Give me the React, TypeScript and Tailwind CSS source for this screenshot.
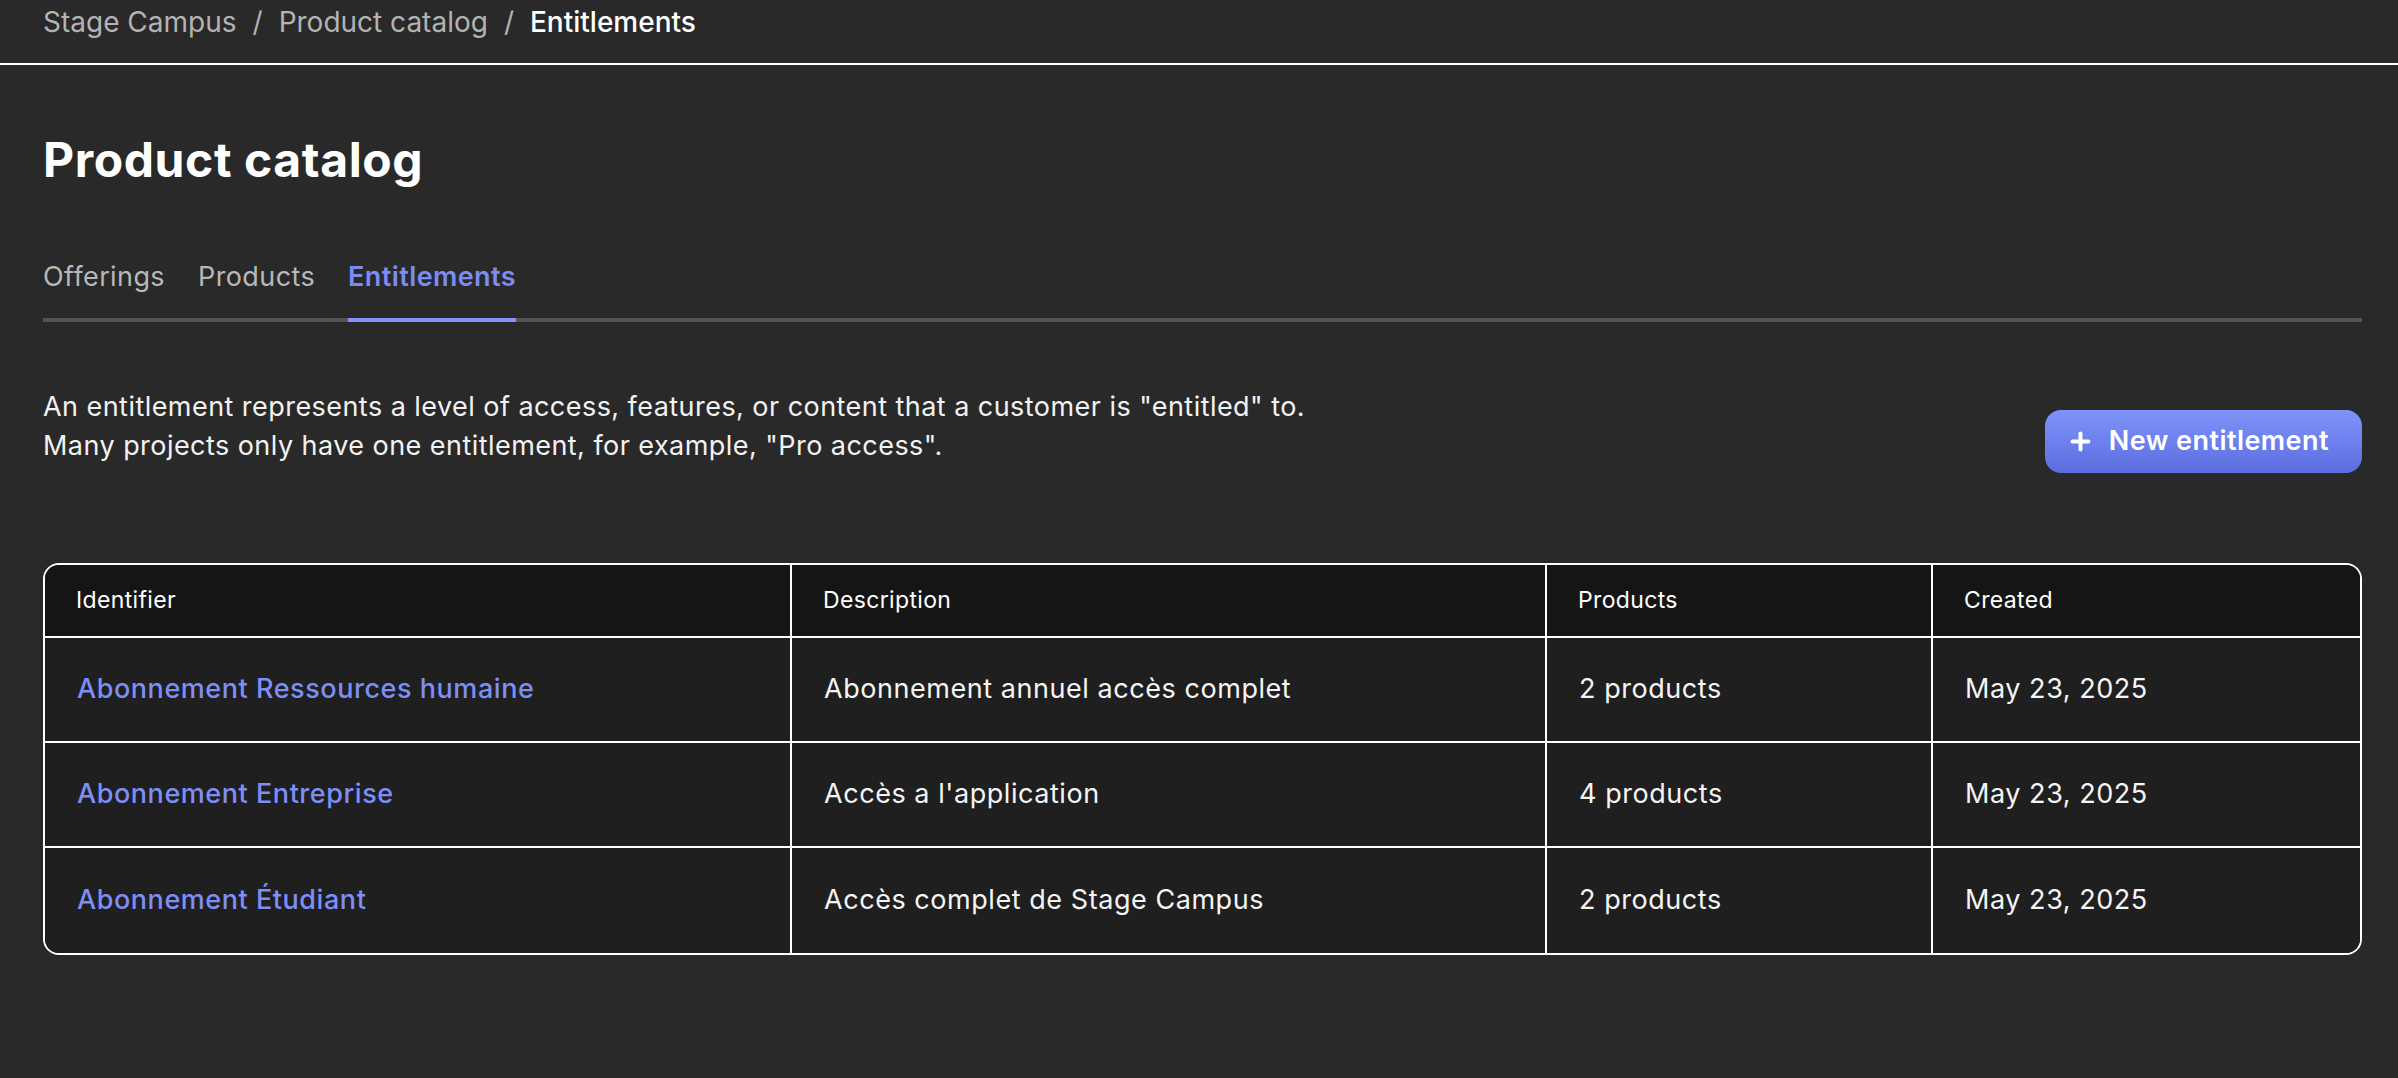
import React from "react";

const rows = [
  {
    id: "Abonnement Ressources humaine",
    desc: "Abonnement annuel accès complet",
    products: "2 products",
    created: "May 23, 2025",
  },
  {
    id: "Abonnement Entreprise",
    desc: "Accès a l'application",
    products: "4 products",
    created: "May 23, 2025",
  },
  {
    id: "Abonnement Étudiant",
    desc: "Accès complet de Stage Campus",
    products: "2 products",
    created: "May 23, 2025",
  },
];

function PlusIcon() {
  return (
    <svg width="21" height="21" viewBox="0 0 21 21" fill="none" aria-hidden="true">
      <path d="M10.5 2.5v16M2.5 10.5h16" stroke="white" strokeWidth="4" strokeLinecap="round" />
    </svg>
  );
}

export default function App() {
  return (
    <div className="min-h-screen bg-[#292929] text-white font-['Inter','Noto_Sans',sans-serif] antialiased">
      {/* Breadcrumb bar */}
      <div className="h-[65px] border-b-2 border-white pl-[43px] pt-[5px]">
        <div className="flex items-center gap-[16px] text-[28px] leading-[34px]">
          <span className="text-[#b3b3b3]">Stage Campus</span>
          <span className="text-[#b3b3b3]">/</span>
          <span className="text-[#b3b3b3]">Product catalog</span>
          <span className="text-[#b3b3b3]">/</span>
          <span className="font-medium text-white">Entitlements</span>
        </div>
      </div>

      <div className="pl-[43px] pr-[36px]">
        <h1 className="mt-[66px] text-[48px] leading-[58px] font-bold tracking-[0.6px]">Product catalog</h1>

        {/* Tabs */}
        <div className="mt-[71px] flex gap-[33px] border-b-4 border-[#555555] text-[27px] leading-[33px] tracking-[0.4px]">
          <div className="pb-[25px] text-[#b8b8b8]">Offerings</div>
          <div className="pb-[25px] text-[#b8b8b8]">Products</div>
          <div className="-mb-[4px] border-b-4 border-[#7f93f9] pb-[25px] font-semibold text-[#7b8cf5]">
            Entitlements
          </div>
        </div>

        {/* Description + button */}
        <div className="mt-[65px] flex items-start justify-between">
          <p className="text-[27px] leading-[39px] tracking-[0.45px] text-[#f2f2f2]">
            An entitlement represents a level of access, features, or content that a customer is "entitled" to.
            <br />
            Many projects only have one entitlement, for example, "Pro access".
          </p>
          <button className="mt-[23px] flex h-[63px] items-center gap-[18px] rounded-[16px] bg-gradient-to-b from-[#8093fa] to-[#5c6ddf] pl-[25px] pr-[33px] text-[27px] font-semibold tracking-[0.45px] text-white">
            <PlusIcon />
            <span>New entitlement</span>
          </button>
        </div>

        {/* Table */}
        <div className="mt-[90px] overflow-hidden rounded-[16px] border-2 border-white">
          <div className="grid grid-cols-[747px_755px_386px_1fr]">
            {["Identifier", "Description", "Products", "Created"].map((h, i) => (
              <div
                key={h}
                className={
                  "flex h-[73px] items-center border-b-2 border-white bg-[#151515] pl-[31px] text-[23px] tracking-[0.35px] text-white " +
                  (i < 3 ? "border-r-2" : "")
                }
              >
                {h}
              </div>
            ))}
            {rows.map((r, ri) => {
              const last = ri === rows.length - 1;
              const base =
                "flex h-[105px] items-center bg-[#1f1f1f] pl-[32px] text-[27px] tracking-[0.55px] border-white " +
                (last ? "" : "border-b-2 ");
              return (
                <React.Fragment key={r.id}>
                  <div className={base + "border-r-2 font-medium tracking-[0.45px] text-[#7d8ef5]"}>{r.id}</div>
                  <div className={base + "border-r-2 text-[#f5f5f5]"}>{r.desc}</div>
                  <div className={base + "border-r-2 text-[#f5f5f5]"}>{r.products}</div>
                  <div className={base + "text-[#f5f5f5]"}>{r.created}</div>
                </React.Fragment>
              );
            })}
          </div>
        </div>
      </div>
    </div>
  );
}
